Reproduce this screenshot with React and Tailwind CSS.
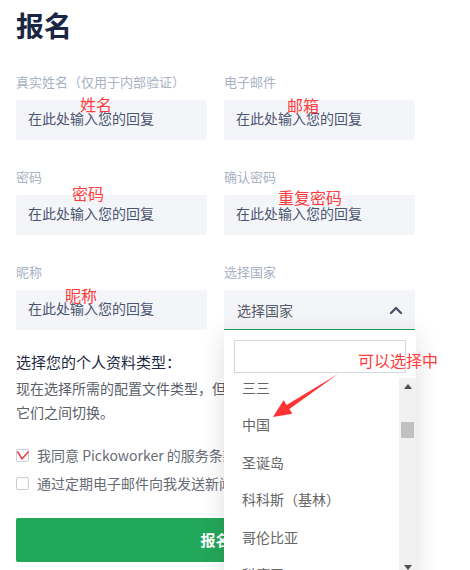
import React from "react";

const fields = [
  { label: "真实姓名（仅用于内部验证）" },
  { label: "电子邮件" },
  { label: "密码" },
  { label: "确认密码" },
  { label: "昵称" },
];

const countries = ["三三", "中国", "圣诞岛", "科科斯（基林）", "哥伦比亚", "科摩罗"];

function TextField({ label }) {
  return (
    <div className="flex flex-col">
      <label className="mb-[9px] text-[13px] leading-[18px] text-[#a9b1c3]">{label}</label>
      <div className="flex h-10 items-center rounded-[2px] bg-[#f4f5f9] px-3 pb-[5px] text-sm text-[#4b5470]">
        在此处输入您的回复
      </div>
    </div>
  );
}

function CountrySelect() {
  return (
    <div className="flex flex-col">
      <label className="mb-[9px] text-[13px] leading-[18px] text-[#a9b1c3]">选择国家</label>
      <div className="relative">
        <div className="flex h-10 items-center justify-between rounded-t-[3px] border-b border-[#1fa650] bg-[#f4f5f9] pl-[13px] pr-3 text-sm text-[#555b66]">
          <span>选择国家</span>
          <svg width="14" height="10" viewBox="0 0 14 10" fill="none">
            <path d="M2 8 L7 3 L12 8" stroke="#4a5266" strokeWidth="2.4" strokeLinecap="round" strokeLinejoin="round" />
          </svg>
        </div>
        {/* open country list */}
        <div className="absolute left-0 top-10 z-10 flex h-[246px] w-[192px] flex-col bg-white shadow-[0_6px_22px_rgba(70,40,40,0.16)]">
          <div className="px-[10px] pt-[10px]">
            <div className="h-[33px] border border-[#d3d7de] bg-white" />
          </div>
          <div className="mt-[5px] flex min-h-0 flex-1">
            <div className="min-w-0 flex-1 overflow-hidden">
              <div className="-mt-[10px]">
                {countries.map((c) => (
                  <div key={c} className="flex h-[37.5px] items-center pl-[18px] text-sm text-[#666]">
                    {c}
                  </div>
                ))}
              </div>
            </div>
            <div className="flex w-[17px] flex-col bg-[#f1f1f1]">
              <div className="flex h-[17px] items-center justify-center">
                <svg width="8" height="5" viewBox="0 0 8 5">
                  <path d="M0 5 L4 0 L8 5 Z" fill="#505050" />
                </svg>
              </div>
              <div className="flex-1 px-[2px] pt-[27px]">
                <div className="h-4 bg-[#c1c1c1]" />
              </div>
              <div className="flex h-[17px] items-center justify-center">
                <svg width="8" height="5" viewBox="0 0 8 5">
                  <path d="M0 0 L8 0 L4 5 Z" fill="#505050" />
                </svg>
              </div>
            </div>
          </div>
        </div>
      </div>
    </div>
  );
}

function Check({ checked, children }) {
  return (
    <div className="flex h-7 items-center gap-[8px]">
      <div className="relative h-[13px] w-[13px] rounded-[2px] border border-[#c9cdd8] bg-white">
        {checked && (
          <svg className="absolute -left-[1px] -top-[1px]" width="14" height="14" viewBox="0 0 14 14" fill="none">
            <path d="M1.5 2.5 L6 10 L12.5 2.5" stroke="#e8404a" strokeWidth="1.5" strokeLinejoin="round" />
          </svg>
        )}
      </div>
      <span className="text-sm text-[#666b75]">{children}</span>
    </div>
  );
}

export default function App() {
  return (
    <div className="relative h-[570px] w-[470px] overflow-hidden bg-white font-['Noto_Sans_CJK_SC','Noto_Sans',sans-serif]">
      <div className="ml-4 w-[399px]">
        <h1 className="pt-2 text-[28px] font-bold leading-[34px] text-[#1b2742]">报名</h1>

        <div className="mt-[31px] grid grid-cols-2 gap-x-[17px] gap-y-[28px]">
          {fields.map((f) => (
            <TextField key={f.label} label={f.label} />
          ))}
          <CountrySelect />
        </div>

        <h2 className="mt-[21px] text-[15px] leading-[22px] text-[#1f2a44]">选择您的个人资料类型：</h2>
        <p className="mt-[3px] w-[330px] text-sm leading-6 text-[#5a5f6a]">
          现在选择所需的配置文件类型，但您以后可以随时在它们之间切换。
        </p>

        <div className="mt-[17px]">
          <Check checked>我同意 Pickoworker 的服务条款和隐私政策</Check>
          <Check>通过定期电子邮件向我发送新闻和优惠</Check>
        </div>

        <button className="mt-[21px] flex h-11 w-full items-center justify-center rounded-[2px] bg-[#22a85a] text-[15px] font-bold text-white">
          报名
        </button>
      </div>

      {/* red notes drawn on top of the form */}
      <span className="absolute left-[80px] top-[96px] text-[16px] leading-4 text-[#ff3b3b]">姓名</span>
      <span className="absolute left-[287px] top-[97px] text-[16px] leading-4 text-[#ff3b3b]">邮箱</span>
      <span className="absolute left-[72px] top-[185px] text-[16px] leading-4 text-[#ff3b3b]">密码</span>
      <span className="absolute left-[278px] top-[189px] text-[16px] leading-4 text-[#ff3b3b]">重复密码</span>
      <span className="absolute left-[65px] top-[287px] text-[16px] leading-4 text-[#ff3b3b]">昵称</span>
      <span className="absolute left-[358px] top-[352px] z-20 text-[16px] leading-4 text-[#ff3b3b]">可以选择中</span>
      <svg className="pointer-events-none absolute left-0 top-0 z-20" width="470" height="570">
        <polygon
          points="273,417 283.6,400.3 286.6,404.9 338,374 289.4,409.1 292.4,413.7"
          fill="#ff3333"
        />
      </svg>
    </div>
  );
}
